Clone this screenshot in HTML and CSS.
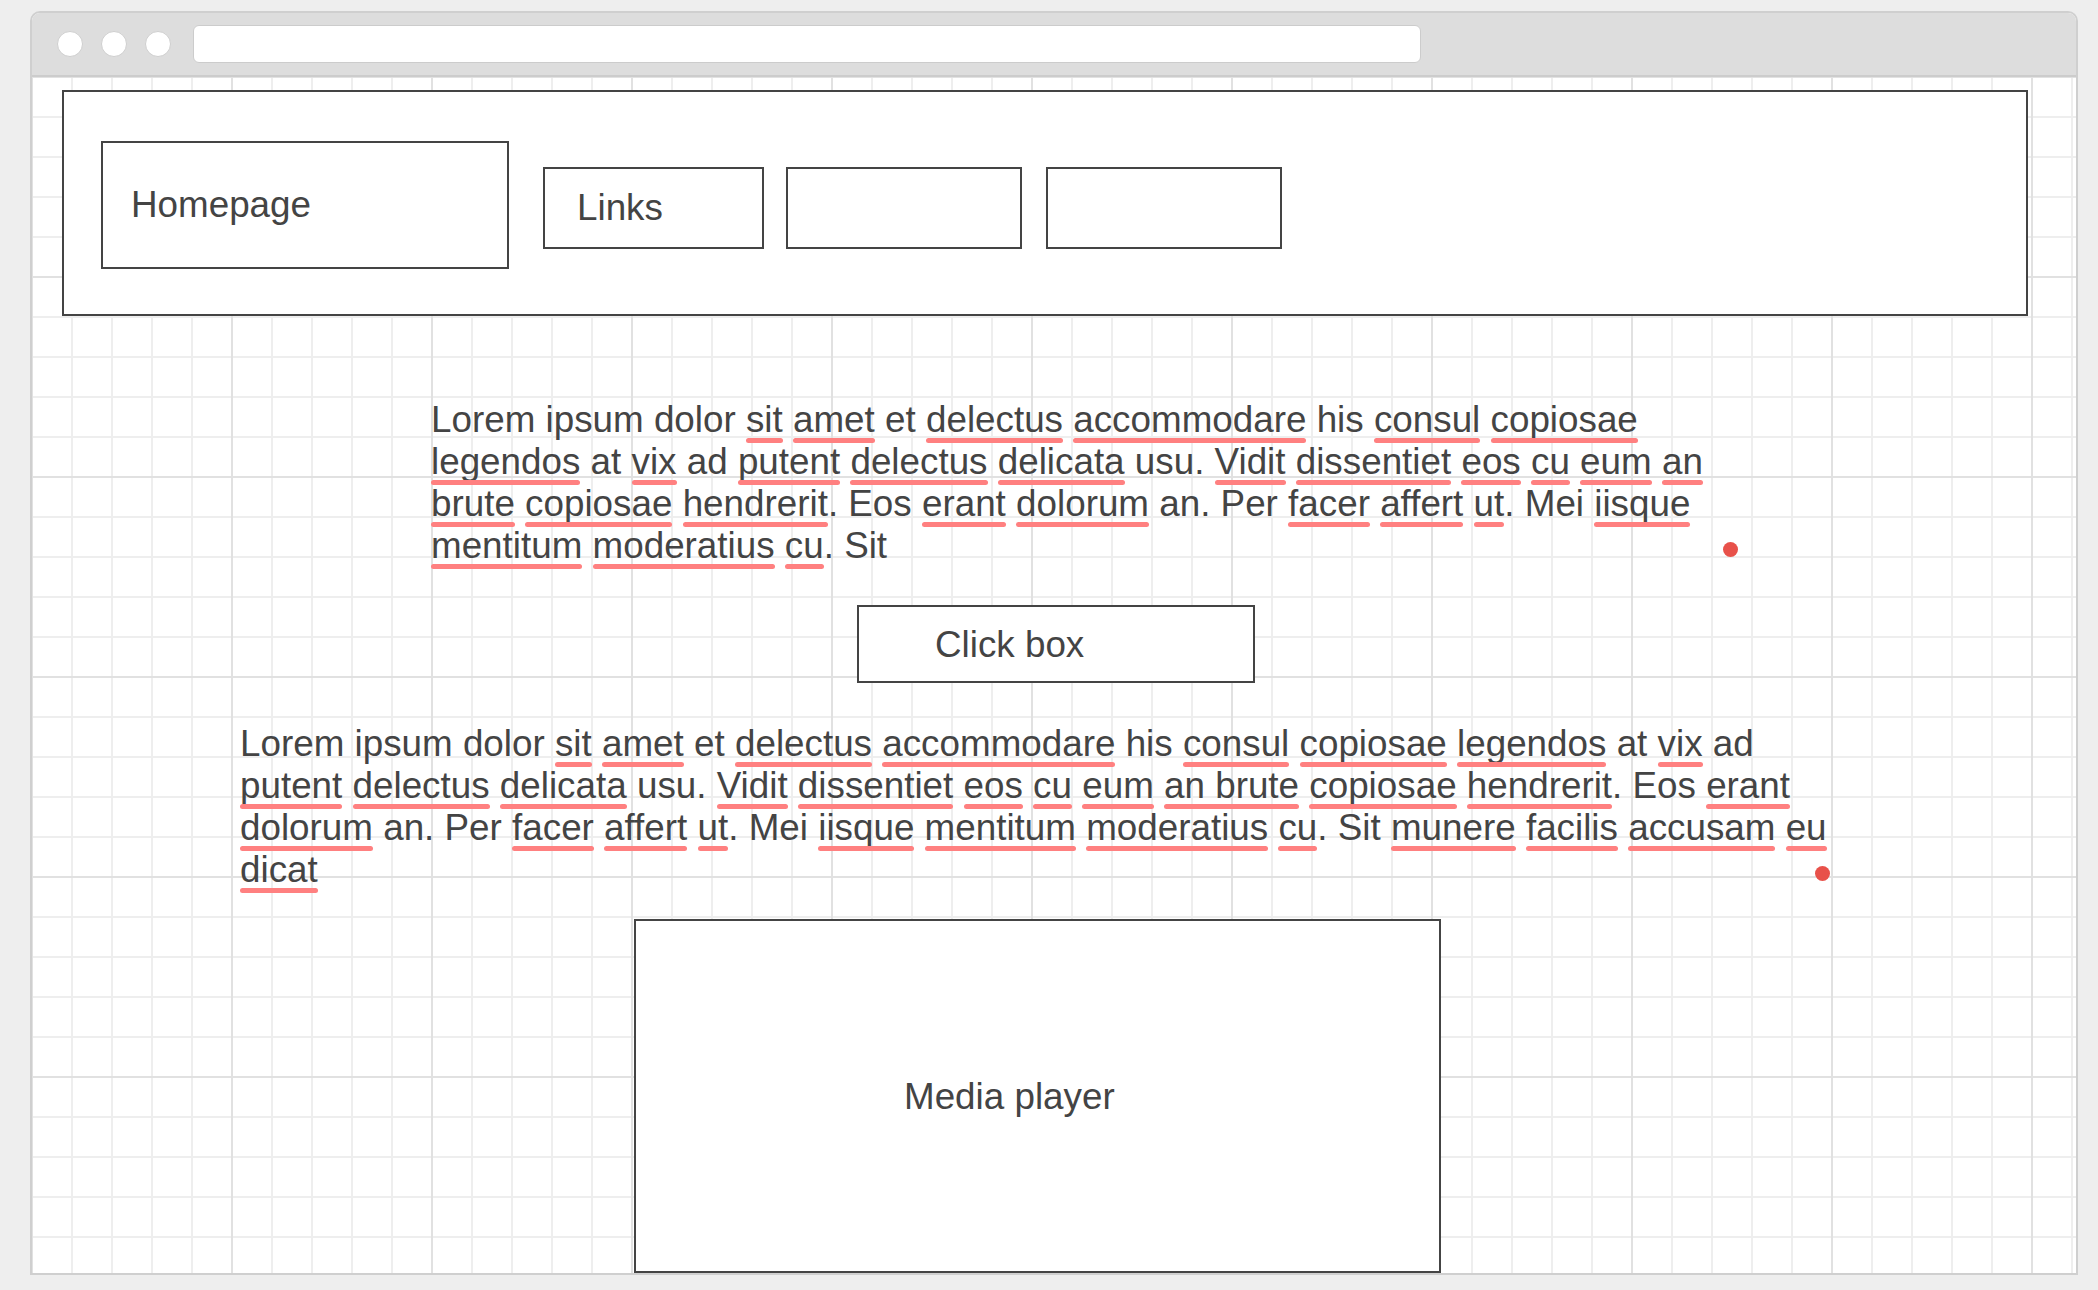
FILE: index.html
```html
<!DOCTYPE html>
<html lang="en">
<head>
<meta charset="utf-8">
<title>Wireframe</title>
<link rel="stylesheet" href="styles.css">
</head>
<body>
<div class="window">
  <div class="toolbar">
    <span class="dot-btn"></span>
    <span class="dot-btn"></span>
    <span class="dot-btn"></span>
    <div class="urlbar"></div>
  </div>
  <div class="canvas">
    <header class="header">
      <div class="box home">Homepage</div>
      <nav class="nav">
        <div class="box nav-item links">Links</div>
        <div class="box nav-item wide"></div>
        <div class="box nav-item wide"></div>
      </nav>
    </header>

    <p class="para para-one">Lorem ipsum dolor <span class="sp">sit</span> <span class="sp">amet</span> et <span class="sp">delectus</span> <span class="sp">accommodare</span> his <span class="sp">consul</span> <span class="sp">copiosae</span> <span class="sp">legendos</span> at <span class="sp">vix</span> ad <span class="sp">putent</span> <span class="sp">delectus</span> <span class="sp">delicata</span> usu. <span class="sp">Vidit</span> <span class="sp">dissentiet</span> <span class="sp">eos</span> <span class="sp">cu</span> <span class="sp">eum</span> <span class="sp">an</span> <span class="sp">brute</span> <span class="sp">copiosae</span> <span class="sp">hendrerit</span>. Eos <span class="sp">erant</span> <span class="sp">dolorum</span> an. Per <span class="sp">facer</span> <span class="sp">affert</span> <span class="sp">ut</span>. Mei <span class="sp">iisque</span> <span class="sp">mentitum</span> <span class="sp">moderatius</span> <span class="sp">cu</span>. Sit<span class="pin"></span></p>

    <div class="box click">Click box</div>

    <p class="para para-two">Lorem ipsum dolor <span class="sp">sit</span> <span class="sp">amet</span> et <span class="sp">delectus</span> <span class="sp">accommodare</span> his <span class="sp">consul</span> <span class="sp">copiosae</span> <span class="sp">legendos</span> at <span class="sp">vix</span> ad <span class="sp">putent</span> <span class="sp">delectus</span> <span class="sp">delicata</span> usu. <span class="sp">Vidit</span> <span class="sp">dissentiet</span> <span class="sp">eos</span> <span class="sp">cu</span> <span class="sp">eum</span> <span class="sp">an brute</span> <span class="sp">copiosae</span> <span class="sp">hendrerit</span>. Eos <span class="sp">erant</span> <span class="sp">dolorum</span> an. Per <span class="sp">facer</span> <span class="sp">affert</span> <span class="sp">ut</span>. Mei <span class="sp">iisque</span> <span class="sp">mentitum</span> <span class="sp">moderatius</span> <span class="sp">cu</span>. Sit <span class="sp">munere</span> <span class="sp">facilis</span> <span class="sp">accusam</span> <span class="sp">eu</span> <span class="sp">dicat</span><span class="pin"></span></p>

    <div class="box media">Media player</div>
  </div>
</div>
</body>
</html>
```

FILE: styles.css
```css
* { box-sizing: border-box; }

html, body {
  margin: 0;
  padding: 0;
}

body {
  background: #eeeeee;
  font-family: "Liberation Sans", Arial, Helvetica, sans-serif;
  font-size: 36.8px;
  color: #444444;
  width: 2098px;
  height: 1290px;
  overflow: hidden;
}

.window {
  margin: 11px 0 0 30px;
  width: 2048px;
  height: 1264px;
  border: 2px solid #cfcfcf;
  border-radius: 10px 10px 0 0;
  overflow: hidden;
  display: flex;
  flex-direction: column;
  background: #ffffff;
}

.toolbar {
  flex: 0 0 auto;
  height: 64px;
  background: #dddddd;
  border-bottom: 2px solid #cccccc;
  display: flex;
  align-items: center;
  padding-left: 25px;
  gap: 18px;
}

.dot-btn {
  width: 26px;
  height: 26px;
  border-radius: 50%;
  background: #ffffff;
  border: 1.5px solid #cfcfcf;
}

.urlbar {
  margin-left: 4px;
  width: 1228px;
  height: 38px;
  background: #ffffff;
  border: 1.5px solid #cccccc;
  border-radius: 6px;
}

.canvas {
  flex: 1 1 auto;
  position: relative;
  overflow: hidden;
  padding: 13px 48px 0 30px;
  background-color: #ffffff;
  background-image:
    linear-gradient(to right, #e1e1e1 2px, transparent 2px),
    linear-gradient(to bottom, #e1e1e1 2px, transparent 2px),
    linear-gradient(to right, #eeeeee 2px, transparent 2px),
    linear-gradient(to bottom, #eeeeee 2px, transparent 2px);
  background-size: 200px 200px, 200px 200px, 40px 40px, 40px 40px;
  background-position: -1px -1px, -1px -1px, -1px -1px, -1px -1px;
}

.box {
  background: #ffffff;
  border: 2px solid #444444;
}

.header {
  height: 226px;
  display: flex;
  align-items: flex-start;
  padding: 49px 0 0 37px;
  background: #ffffff;
  border: 2px solid #444444;
}

.home {
  width: 408px;
  height: 128px;
  display: flex;
  align-items: center;
  padding-left: 28px;
}

.nav {
  display: flex;
  margin: 26px 0 0 34px;
}

.nav-item {
  height: 82px;
  display: flex;
  align-items: center;
}

.links {
  width: 221px;
  padding-left: 32px;
  margin-right: 22px;
}

.wide {
  width: 236px;
  margin-right: 24px;
}

.para {
  position: relative;
  margin: 0;
  line-height: 42px;
}

.para-one {
  width: 1317px;
  margin: 83px 0 0 369px;
}

.para-two {
  width: 1600px;
  margin: 40px 0 0 178px;
}

.sp {
  position: relative;
}

.sp::after {
  content: "";
  position: absolute;
  left: 0;
  right: 0;
  bottom: -3px;
  height: 5px;
  border-radius: 3px;
  background: #ff8080;
}

.pin {
  position: absolute;
  right: 10px;
  bottom: 10px;
  width: 15px;
  height: 15px;
  border-radius: 50%;
  background: #e8514a;
}

.click {
  width: 398px;
  height: 78px;
  margin: 38px 0 0 795px;
  display: flex;
  align-items: center;
  padding-left: 76px;
  padding-top: 2px;
}

.media {
  width: 807px;
  height: 354px;
  margin: 28px 0 0 572px;
  display: flex;
  align-items: center;
  padding-left: 268px;
  padding-top: 2px;
}
```
